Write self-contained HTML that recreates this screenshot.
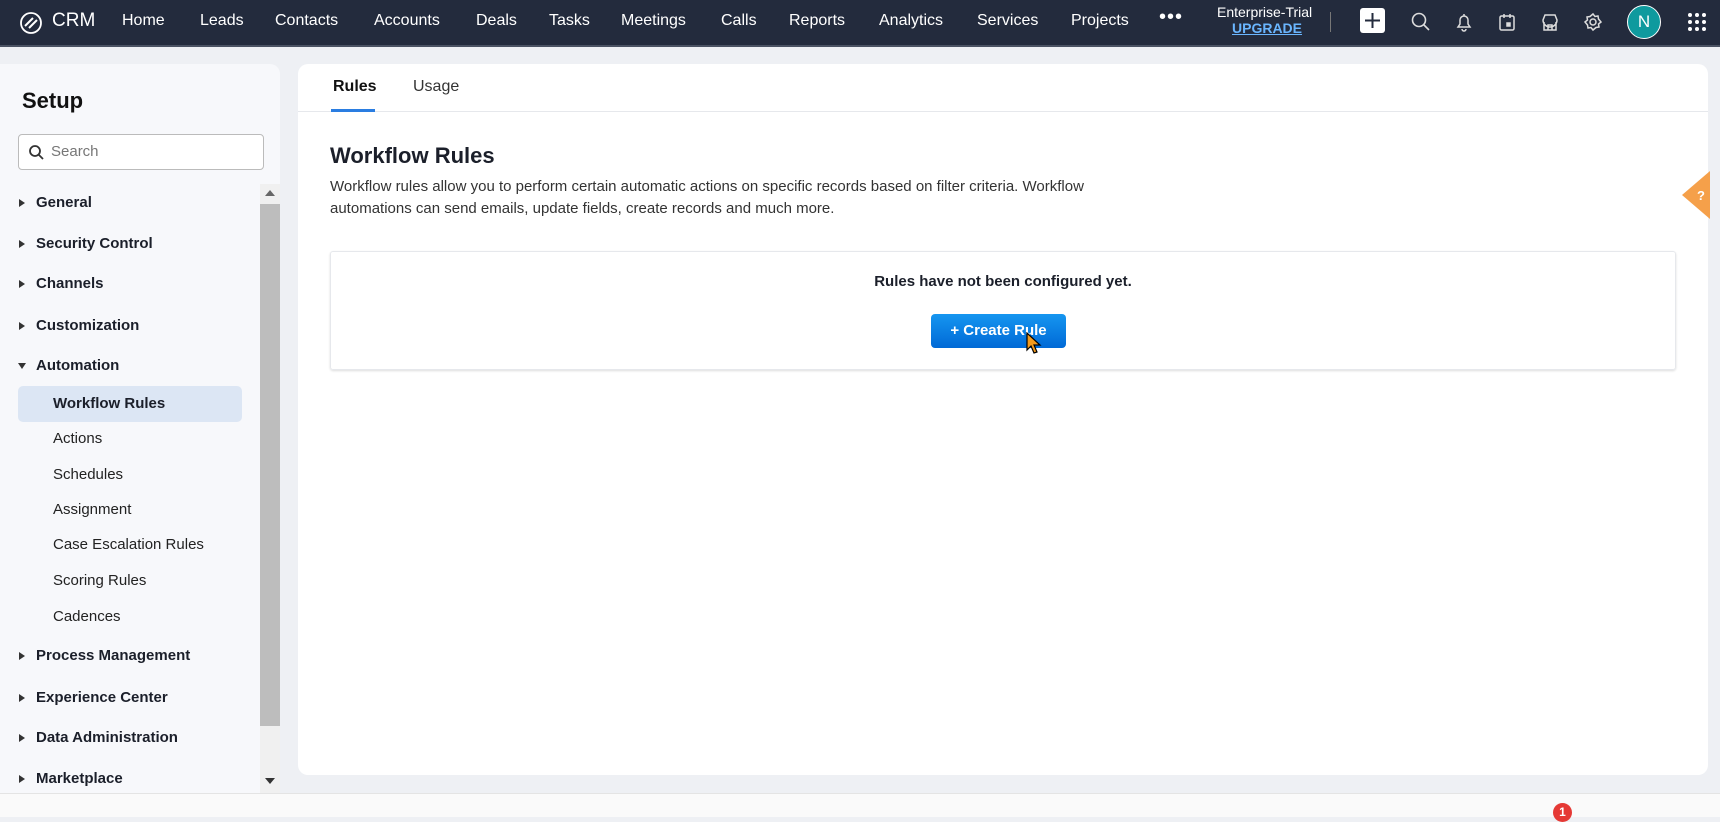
<!DOCTYPE html><html><head><style>
*{box-sizing:border-box;margin:0;padding:0}
body{width:1720px;height:817px;overflow:hidden;background:#eef0f4;font-family:"Liberation Sans",sans-serif;position:relative;color:#111}
.nav{position:absolute;left:0;top:0;width:1720px;height:47px;background:#232b3d;border-bottom:2px solid #4a5263}
.nav span{position:absolute;top:12px;color:#fff;font-size:16px}
.ic{position:absolute;top:11px}
.left{position:absolute;left:0;top:64px;width:280px;height:730px;background:#f7f8fb;border-radius:0 10px 0 0}
.left .it{position:absolute;left:36px;font-size:15px;font-weight:bold;color:#1b1f2a}
.left .it:before{content:"";position:absolute;left:-17px;top:5px;border-left:6px solid #333;border-top:4px solid transparent;border-bottom:4px solid transparent}
.left .it.open:before{border-top:6px solid #333;border-left:4px solid transparent;border-right:4px solid transparent;border-bottom:0;left:-18px;top:6px}
.left .sub{position:absolute;left:53px;font-size:15px;color:#222}
.main{position:absolute;left:298px;top:64px;width:1410px;height:711px;background:#fff;border-radius:10px}
</style></head><body>
<div class="nav">
<svg class="ic" style="left:18px;top:12px" width="26" height="22" viewBox="0 0 26 22"><circle cx="13" cy="11" r="10" fill="none" stroke="#fff" stroke-width="1.8"/><path d="M7 14l8-8M11 16l8-8" stroke="#fff" stroke-width="2" fill="none"/></svg>
<span style="left:52px;font-size:19px;top:10px">CRM</span>
<span style="left:122px">Home</span><span style="left:200px">Leads</span><span style="left:275px">Contacts</span><span style="left:374px">Accounts</span><span style="left:476px">Deals</span><span style="left:549px">Tasks</span><span style="left:621px">Meetings</span><span style="left:721px">Calls</span><span style="left:789px">Reports</span><span style="left:879px">Analytics</span><span style="left:977px">Services</span><span style="left:1071px">Projects</span><span style="left:1159px;top:6px;font-size:20px;letter-spacing:1px">•••</span>
<span style="left:1217px;top:4px;font-size:14px">Enterprise-Trial</span>
<span style="left:1232px;top:20px;font-size:14px;color:#6ab6ff;text-decoration:underline;font-weight:bold">UPGRADE</span>
<div style="position:absolute;left:1330px;top:12px;width:1px;height:20px;background:#777"></div>
<div style="position:absolute;left:1360px;top:8px;width:25px;height:25px;background:#fff;border-radius:3px"></div>
<svg class="ic" style="left:1362px;top:10px" width="21" height="21"><path d="M10.5 3v15M3 10.5h15" stroke="#232b3d" stroke-width="2"/></svg>
<svg class="ic" style="left:1410px" width="22" height="22" fill="none" stroke="#ddd" stroke-width="1.6"><circle cx="9" cy="9" r="6.5"/><path d="M14 14l5 5"/></svg>
<svg class="ic" style="left:1453px" width="22" height="22" fill="none" stroke="#ddd" stroke-width="1.5"><path d="M5 16h12l-2-3V9a4 4 0 0 0-8 0v4zM9 18a2 2 0 0 0 4 0M11 3v2"/></svg>
<svg class="ic" style="left:1496px" width="22" height="22" fill="none" stroke="#ddd" stroke-width="1.5"><rect x="4" y="5" width="14" height="14" rx="1.5"/><path d="M8 3v4M14 3v4"/><rect x="11" y="12" width="3" height="3" fill="#ddd"/></svg>
<svg class="ic" style="left:1539px" width="22" height="22" fill="none" stroke="#ddd" stroke-width="1.5"><path d="M4 9l2-5h10l2 5v0a3 3 0 0 1-14 0zM5 11v8h12v-8M9 19v-5h4v5"/></svg>
<svg class="ic" style="left:1582px" width="22" height="22" fill="none" stroke="#ddd" stroke-width="1.5"><circle cx="11" cy="11" r="3"/><path d="M11 3l2 2.5 3-.5.5 3L19 11l-2.5 2 .5 3-3 .5L11 19l-2-2.5-3 .5-.5-3L3 11l2.5-2-.5-3 3-.5z"/></svg>
<div style="position:absolute;left:1627px;top:5px;width:34px;height:34px;border-radius:50%;background:#0f9a9e;border:1.5px solid #fff;color:#fff;font-size:17px;text-align:center;line-height:31px">N</div>
<svg class="ic" style="left:1687px;top:12px" width="20" height="20" fill="#fff"><circle cx="3" cy="3" r="2"/><circle cx="10" cy="3" r="2"/><circle cx="17" cy="3" r="2"/><circle cx="3" cy="10" r="2"/><circle cx="10" cy="10" r="2"/><circle cx="17" cy="10" r="2"/><circle cx="3" cy="17" r="2"/><circle cx="10" cy="17" r="2"/><circle cx="17" cy="17" r="2"/></svg>
</div>
<div class="left">
<div style="position:absolute;left:22px;top:24px;font-size:22px;font-weight:bold">Setup</div>
<div style="position:absolute;left:18px;top:70px;width:246px;height:36px;border:1px solid #bbb;border-radius:4px;background:#fff"></div>
<svg style="position:absolute;left:28px;top:80px" width="16" height="16" fill="none" stroke="#333" stroke-width="1.8"><circle cx="7" cy="7" r="5"/><path d="M11 11l4 4"/></svg>
<div style="position:absolute;left:51px;top:79px;font-size:15px;color:#777">Search</div>
<div style="position:absolute;left:260px;top:120px;width:20px;height:610px;background:#f0f0f0"></div>
<div style="position:absolute;left:260px;top:140px;width:20px;height:522px;background:#bdbdbd"></div>
<div style="position:absolute;left:265px;top:126px;border-bottom:6px solid #666;border-left:5px solid transparent;border-right:5px solid transparent"></div>
<div style="position:absolute;left:265px;top:714px;border-top:6px solid #333;border-left:5px solid transparent;border-right:5px solid transparent"></div>
<div class="it" style="top:130px">General</div>
<div class="it" style="top:171px">Security Control</div>
<div class="it" style="top:211px">Channels</div>
<div class="it" style="top:253px">Customization</div>
<div class="it open" style="top:293px">Automation</div>
<div style="position:absolute;left:18px;top:322px;width:224px;height:36px;background:#dce6f4;border-radius:5px"></div>
<div class="sub" style="top:331px;font-weight:bold;color:#1b1f2a">Workflow Rules</div>
<div class="sub" style="top:366px">Actions</div>
<div class="sub" style="top:402px">Schedules</div>
<div class="sub" style="top:437px">Assignment</div>
<div class="sub" style="top:472px">Case Escalation Rules</div>
<div class="sub" style="top:508px">Scoring Rules</div>
<div class="sub" style="top:544px">Cadences</div>
<div class="it" style="top:583px">Process Management</div>
<div class="it" style="top:625px">Experience Center</div>
<div class="it" style="top:665px">Data Administration</div>
<div class="it" style="top:706px">Marketplace</div>
</div>
<div class="main">
<div style="position:absolute;left:35px;top:14px;font-size:16px;font-weight:bold">Rules</div>
<div style="position:absolute;left:115px;top:14px;font-size:16px;color:#333">Usage</div>
<div style="position:absolute;left:0;top:47px;width:1410px;height:1px;background:#e6e8ec"></div>
<div style="position:absolute;left:33px;top:45px;width:44px;height:3px;background:#2a7de1"></div>
<div style="position:absolute;left:32px;top:79px;font-size:22px;font-weight:bold;color:#1b1f2a">Workflow Rules</div>
<div style="position:absolute;left:32px;top:112px;width:820px;font-size:15px;line-height:22px;color:#333">Workflow rules allow you to perform certain automatic actions on specific records based on filter criteria. Workflow automations can send emails, update fields, create records and much more.</div>
<div style="position:absolute;left:32px;top:187px;width:1346px;height:119px;border:1px solid #e6e8ec;border-radius:3px;box-shadow:0 1px 2px #ddd"></div>
<div style="position:absolute;left:32px;width:1346px;top:209px;text-align:center;font-size:15px;font-weight:bold;color:#1b1f2a">Rules have not been configured yet.</div>
<div style="position:absolute;left:633px;top:250px;width:135px;height:34px;border-radius:4px;background:linear-gradient(#1696f0,#0069d6);color:#fff;font-size:15px;font-weight:bold;line-height:34px;text-align:center">+ Create Rule</div>
<svg style="position:absolute;left:728px;top:268px" width="16" height="24"><path d="M1 1v17l4-4 3 7 3-1-3-7h6z" fill="#f39a1e" stroke="#000" stroke-width="1.2"/></svg>
</div>
<svg style="position:absolute;left:1680px;top:171px" width="30" height="48"><path d="M30 0v48L2 24z" fill="#f5a04a"/><text x="17" y="29" fill="#fff" font-size="13" font-weight="bold" font-family="Liberation Sans">?</text></svg>
<div style="position:absolute;left:0;top:793px;width:1720px;height:24px;background:#fafafa;border-top:1px solid #e4e4e4"></div>
<div style="position:absolute;left:1553px;top:803px;width:19px;height:19px;border-radius:50%;background:#e53935;color:#fff;font-size:12px;font-weight:bold;text-align:center;line-height:19px">1</div>
</body></html>
